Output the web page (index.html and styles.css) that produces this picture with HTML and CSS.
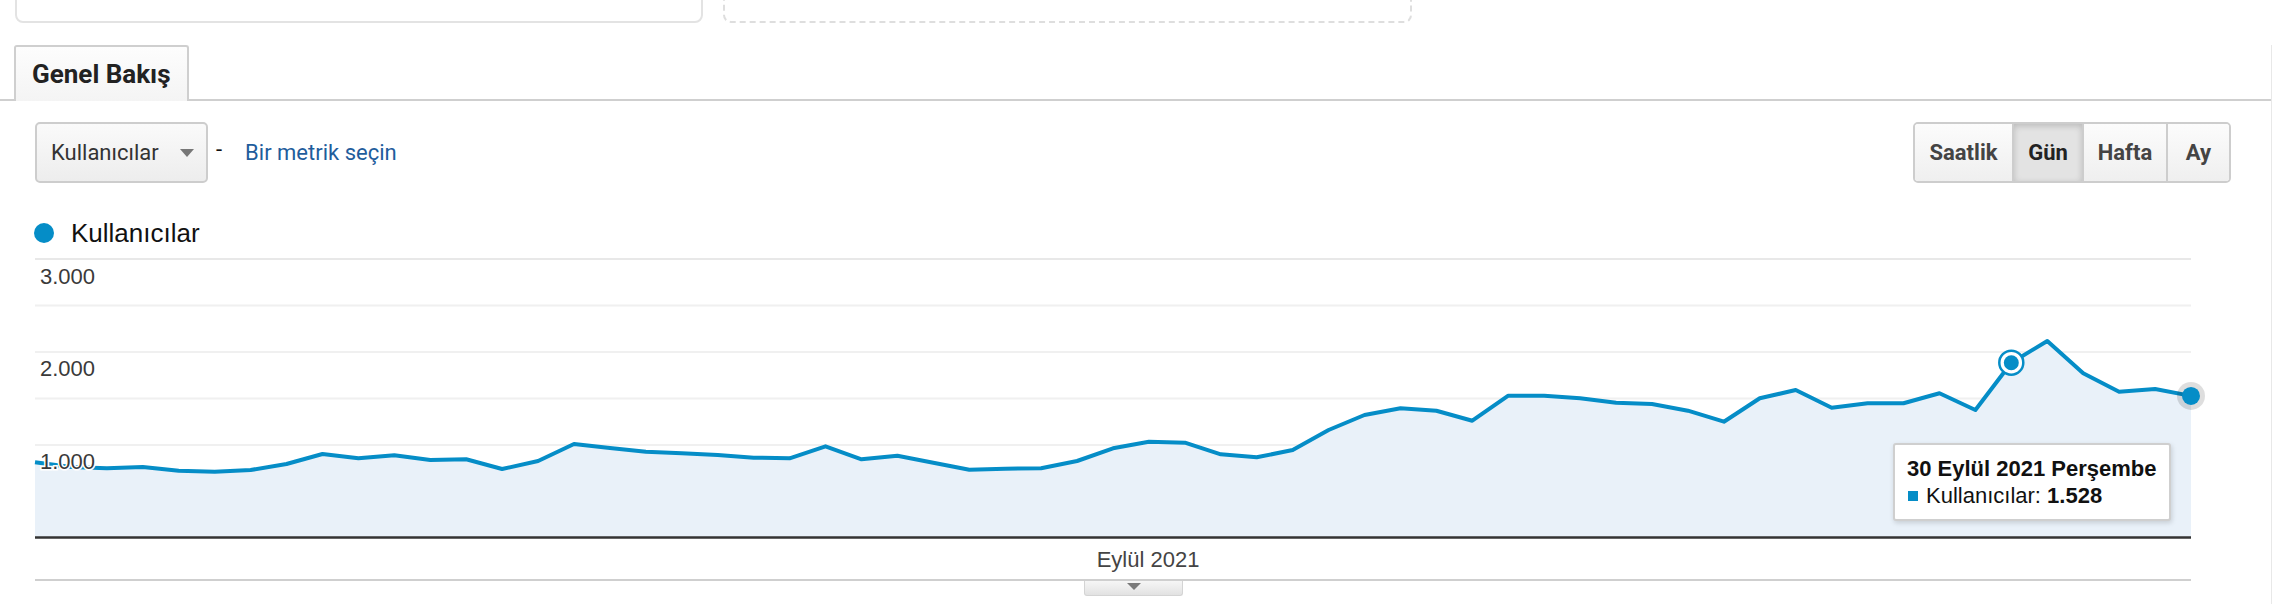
FILE: index.html
```html
<!DOCTYPE html>
<html lang="tr">
<head>
<meta charset="utf-8">
<title>Genel Bakış</title>
<link rel="stylesheet" href="styles.css">
</head>
<body>
<div class="topcards">
  <div class="card solid"></div>
  <div class="card dashed"></div>
</div>
<div class="panel">
  <div class="tabbar">
    <div class="tab">Genel Bakış</div>
  </div>
  <div class="controls">
    <div class="metrics">
      <div class="select"><span>Kullanıcılar</span><span class="caret"></span></div>
      <span class="dash">-</span>
      <a class="link">Bir metrik seçin</a>
    </div>
    <div class="btngroup">
      <button class="b-saat">Saatlik</button><button class="b-gun active">Gün</button><button class="b-hafta">Hafta</button><button class="b-ay">Ay</button>
    </div>
  </div>
  <div class="legend"><span class="dot"></span><span class="legend-text">Kullanıcılar</span></div>
  <div class="chart">
    <svg class="plot" width="2170" height="326" viewBox="0 0 2170 326">
      <g class="grid">
        <line x1="0" y1="6" x2="2156" y2="6" class="gtop"/>
        <line x1="0" y1="52.5" x2="2156" y2="52.5"/>
        <line x1="0" y1="99" x2="2156" y2="99"/>
        <line x1="0" y1="145.5" x2="2156" y2="145.5"/>
        <line x1="0" y1="192" x2="2156" y2="192"/>
        <line x1="0" y1="238.5" x2="2156" y2="238.5"/>
      </g>
      <path class="area" d="M0,209.3 L35.9,214 L71.9,215.3 L107.8,214 L143.7,217.7 L179.7,218.7 L215.6,217 L251.5,211 L287.5,201 L323.4,205.3 L359.3,202.3 L395.3,207 L431.2,206.3 L467.1,216 L503.1,208 L539,191 L574.9,195 L610.9,198.7 L646.8,200.3 L682.7,202 L718.7,204.7 L754.6,205.3 L790.5,193.3 L826.5,206.3 L862.4,202.7 L898.3,209.7 L934.3,216.7 L970.2,215.7 L1006.1,215.3 L1042.1,208 L1078,195.3 L1113.9,188.7 L1149.9,189.7 L1185.8,201.3 L1221.7,204.3 L1257.7,197 L1293.6,177 L1329.5,162 L1365.5,155.3 L1401.4,157.7 L1437.3,167.7 L1473.3,142.7 L1509.2,142.7 L1545.1,145.3 L1581.1,149.7 L1617,151 L1652.9,157.7 L1688.9,168.7 L1724.8,145.3 L1760.7,137 L1796.7,154.7 L1832.6,150.3 L1868.5,150.3 L1904.5,140.3 L1940.4,157 L1976.3,109.7 L2012.3,88 L2048.2,120.3 L2084.1,138.7 L2120.1,136 L2156,142.9 L2156,285 L0,285 Z"/>
      <path class="line" d="M0,209.3 L35.9,214 L71.9,215.3 L107.8,214 L143.7,217.7 L179.7,218.7 L215.6,217 L251.5,211 L287.5,201 L323.4,205.3 L359.3,202.3 L395.3,207 L431.2,206.3 L467.1,216 L503.1,208 L539,191 L574.9,195 L610.9,198.7 L646.8,200.3 L682.7,202 L718.7,204.7 L754.6,205.3 L790.5,193.3 L826.5,206.3 L862.4,202.7 L898.3,209.7 L934.3,216.7 L970.2,215.7 L1006.1,215.3 L1042.1,208 L1078,195.3 L1113.9,188.7 L1149.9,189.7 L1185.8,201.3 L1221.7,204.3 L1257.7,197 L1293.6,177 L1329.5,162 L1365.5,155.3 L1401.4,157.7 L1437.3,167.7 L1473.3,142.7 L1509.2,142.7 L1545.1,145.3 L1581.1,149.7 L1617,151 L1652.9,157.7 L1688.9,168.7 L1724.8,145.3 L1760.7,137 L1796.7,154.7 L1832.6,150.3 L1868.5,150.3 L1904.5,140.3 L1940.4,157 L1976.3,109.7 L2012.3,88 L2048.2,120.3 L2084.1,138.7 L2120.1,136 L2156,142.9"/>
      <line class="axis" x1="0" y1="284.5" x2="2156" y2="284.5"/>
      <g class="ylabels">
        <text x="5" y="31">3.000</text>
        <text x="5" y="123">2.000</text>
        <text x="5" y="216">1.000</text>
      </g>
      <text class="xlabel" x="1113" y="314" text-anchor="middle">Eylül 2021</text>
      <circle cx="1976.3" cy="109.7" r="12" class="hover-ring"/>
      <circle cx="1976.3" cy="109.7" r="7.5" class="hover-dot"/>
      <circle cx="2156" cy="142.9" r="14" class="end-halo"/>
      <circle cx="2156" cy="142.9" r="9" class="end-dot"/>
    </svg>
    <div class="tooltip">
      <div class="tt-title">30 Eylül 2021 Perşembe</div>
      <div class="tt-row"><span class="tt-mark"></span><span>Kullanıcılar: <b>1.528</b></span></div>
    </div>
  </div>
  <div class="xbottom">
    <div class="toggle"><span class="tcaret"></span></div>
  </div>
</div>
</body>
</html>
```

FILE: styles.css
```css
html, body {
  margin: 0;
  padding: 0;
  background: #fff;
}
body {
  font-family: Roboto, "Liberation Sans", Arial, sans-serif;
  color: #222;
  width: 2278px;
  height: 604px;
  overflow: hidden;
}

/* top cards (partially scrolled away) */
.topcards {
  height: 24px;
  display: flex;
  align-items: flex-end;
  overflow: hidden;
  padding-left: 15px;
  gap: 20px;
}
.card {
  height: 60px;
  box-sizing: border-box;
  border-radius: 8px;
  margin-bottom: 1px;
  background: #fff;
}
.card.solid {
  width: 688px;
  border: 2px solid #e3e3e3;
}
.card.dashed {
  width: 689px;
  border: 2px dashed #dedede;
}

.panel {
  width: 2271px;
  border-right: 1px solid #e8e8e8;
  height: 580px;
}

/* tabs */
.tabbar {
  margin-top: 21px;
  display: flex;
  padding-left: 14px;
  border-bottom: 2px solid #cfcfcf;
}
.tab {
  box-sizing: border-box;
  height: 56px;
  width: 175px;
  margin-bottom: -2px;
  border: 2px solid #cfcfcf;
  border-bottom: none;
  border-radius: 3px 3px 0 0;
  background: linear-gradient(#fdfdfd, #f4f4f4);
  display: flex;
  align-items: center;
  padding-left: 16px;
  font-size: 26px;
  font-weight: 700;
  color: #222;
}

/* controls */
.controls {
  margin-top: 21px;
  height: 61px;
  display: flex;
  justify-content: space-between;
  align-items: center;
  padding: 0 40px 0 35px;
}
.metrics {
  display: flex;
  align-items: center;
}
.select {
  box-sizing: border-box;
  width: 173px;
  height: 61px;
  border: 2px solid #cdcdcd;
  border-radius: 5px;
  background: linear-gradient(#fafafa, #ededed);
  display: flex;
  align-items: center;
  padding-left: 14px;
  font-size: 22px;
  color: #333;
}
.caret {
  width: 0;
  height: 0;
  border-left: 7px solid transparent;
  border-right: 7px solid transparent;
  border-top: 8px solid #777;
  margin-left: 21px;
  margin-top: 1px;
}
.dash {
  margin-left: 8px;
  font-size: 22px;
  color: #111;
  margin-top: -6px;
}
.link {
  margin-left: 23px;
  font-size: 22px;
  color: #1f5d9c;
  cursor: pointer;
}
.btngroup {
  display: flex;
  height: 61px;
  box-sizing: border-box;
  border: 2px solid #cdcdcd;
  border-radius: 5px;
  overflow: hidden;
}
.btngroup button {
  font-family: Roboto, "Liberation Sans", Arial, sans-serif;
  font-size: 22px;
  font-weight: 700;
  color: #444;
  border: none;
  border-left: 2px solid #cdcdcd;
  background: linear-gradient(#fcfcfc, #efefef);
  padding: 0;
  margin: 0;
  height: 57px;
}
.btngroup button:first-child {
  border-left: none;
}
.b-saat { width: 97px; }
.b-gun { width: 70px; }
.b-hafta { width: 84px; }
.b-ay { width: 63px; }
.btngroup button.active {
  background: #e3e3e3;
  color: #222;
  box-shadow: inset 0 2px 6px rgba(0, 0, 0, 0.18);
}

/* legend */
.legend {
  margin-top: 30px;
  height: 40px;
  display: flex;
  align-items: center;
  padding-left: 34px;
}
.dot {
  width: 20px;
  height: 20px;
  border-radius: 50%;
  background: #058dc7;
}
.legend-text {
  margin-left: 17px;
  font-family: "Liberation Sans", Arial, sans-serif;
  font-size: 26px;
  color: #111;
}

/* chart */
.chart {
  position: relative;
  height: 326px;
  padding-left: 35px;
}
.plot {
  display: block;
  overflow: visible;
}
.grid line {
  stroke: #f0f0f0;
  stroke-width: 2;
}
.grid line.gtop {
  stroke: #e8e8e8;
}
.area {
  fill: #e9f1f9;
}
.line {
  fill: none;
  stroke: #058dc7;
  stroke-width: 4;
  stroke-linejoin: round;
}
.axis {
  stroke: #333;
  stroke-width: 2.5;
}
.ylabels text {
  font-family: "Liberation Sans", Arial, sans-serif;
  font-size: 22px;
  fill: #3a3a3a;
  stroke: #fff;
  stroke-width: 3px;
  paint-order: stroke;
}
.xlabel {
  font-family: "Liberation Sans", Arial, sans-serif;
  font-size: 22px;
  fill: #444;
}
.hover-ring {
  fill: #fff;
  stroke: #058dc7;
  stroke-width: 2.5;
}
.hover-dot {
  fill: #058dc7;
}
.end-halo {
  fill: rgba(0, 0, 0, 0.13);
}
.end-dot {
  fill: #058dc7;
}

.tooltip {
  position: absolute;
  left: 1893px;
  top: 190px;
  width: 278px;
  height: 78px;
  box-sizing: border-box;
  background: #fff;
  border: 2px solid #cfcfcf;
  border-radius: 3px;
  box-shadow: 1px 2px 5px rgba(0, 0, 0, 0.15);
  padding: 12px 0 0 12px;
  font-family: "Liberation Sans", Arial, sans-serif;
  font-size: 22px;
  color: #111;
}
.tt-title {
  font-weight: 700;
  line-height: 24px;
}
.tt-row {
  display: flex;
  align-items: center;
  line-height: 24px;
  margin-top: 3px;
}
.tt-mark {
  width: 10px;
  height: 10px;
  background: #058dc7;
  margin-right: 8px;
  margin-left: 1px;
}

/* bottom */
.xbottom {
  margin-left: 35px;
  width: 2156px;
  border-top: 2px solid #cfcfcf;
  height: 17px;
}
.toggle {
  margin-left: 1049px;
  width: 99px;
  height: 15px;
  box-sizing: border-box;
  border: 1px solid #d4d4d4;
  border-top: none;
  border-radius: 0 0 3px 3px;
  background: linear-gradient(#f6f6f6, #e2e2e2);
  display: flex;
  justify-content: center;
  padding-top: 2px;
}
.tcaret {
  width: 0;
  height: 0;
  border-left: 7px solid transparent;
  border-right: 7px solid transparent;
  border-top: 7px solid #7a7a7a;
}
```
